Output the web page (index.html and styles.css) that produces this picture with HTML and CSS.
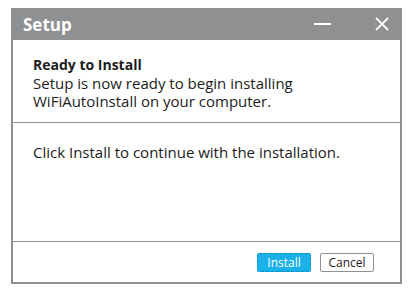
FILE: index.html
```html
<!DOCTYPE html>
<html lang="en">
<head>
  <meta charset="UTF-8" />
  <title>Setup</title>
  <link rel="stylesheet" href="styles.css">
</head>
<body>
  <div class="window">
    <div class="titlebar">
      <span class="title">Setup</span>
      <span class="controls">
        <svg class="ctl" width="18" height="16" viewBox="0 0 18 16"><line x1="0" y1="8" x2="17" y2="8" stroke="#fff" stroke-width="2"/></svg>
        <svg class="ctl" width="16" height="16" viewBox="0 0 16 16"><path d="M2 2 L14 14 M14 2 L2 14" stroke="#fff" stroke-width="1.8" fill="none"/></svg>
      </span>
    </div>
    <div class="header">
      <p class="heading">Ready to Install</p>
      <p>Setup is now ready to begin installing<br>WiFiAutoInstall on your computer.</p>
    </div>
    <div class="content">
      <p>Click Install to continue with the installation.</p>
    </div>
    <div class="footer">
      <button class="btn btn-primary">Install</button>
      <button class="btn">Cancel</button>
    </div>
  </div>
</body>
</html>
```

FILE: styles.css
```css
:root {
  --frame: #8f9092;
  --text: #1c1c1c;
  --accent: #1ab0e8;
}

* {
  margin: 0;
  padding: 0;
  box-sizing: border-box;
}

body {
  font-family: "Open Sans", "Noto Sans", sans-serif;
  background: #fff;
  color: var(--text);
}

.window {
  margin: 8px 0 0 11px;
  width: 391px;
  height: 276px;
  border: 2px solid var(--frame);
  border-top: none;
  display: flex;
  flex-direction: column;
}

.titlebar {
  background: var(--frame);
  height: 32px;
  margin: 0 -2px;
  display: flex;
  align-items: center;
  justify-content: space-between;
  padding: 0 12px 0 12px;
}

.title {
  color: #fff;
  font-weight: 700;
  font-size: 17px;
}

.controls {
  display: flex;
  align-items: center;
  gap: 42px;
}

.ctl {
  display: block;
}

.header {
  height: 83px;
  border-bottom: 1px solid var(--frame);
  padding: 16px 0 0 20px;
  font-size: 15px;
  line-height: 18px;
}

.heading {
  font-weight: 700;
  font-size: 14px;
}

.content {
  flex: 1;
  border-bottom: 1px solid var(--frame);
  padding: 20px 0 0 20px;
  font-size: 15px;
  line-height: 18px;
}

.footer {
  height: 40px;
  display: flex;
  justify-content: flex-end;
  align-items: flex-start;
  gap: 9px;
  padding: 11px 26px 0 0;
}

.btn {
  font-family: inherit;
  font-size: 12px;
  height: 19px;
  width: 54px;
  background: #fff;
  border: 1px solid var(--frame);
  border-radius: 2px;
  color: var(--text);
  line-height: 17px;
}

.btn-primary {
  background: var(--accent);
  color: #fff;
  border: 1px dashed #0a8fc4;
}
```
